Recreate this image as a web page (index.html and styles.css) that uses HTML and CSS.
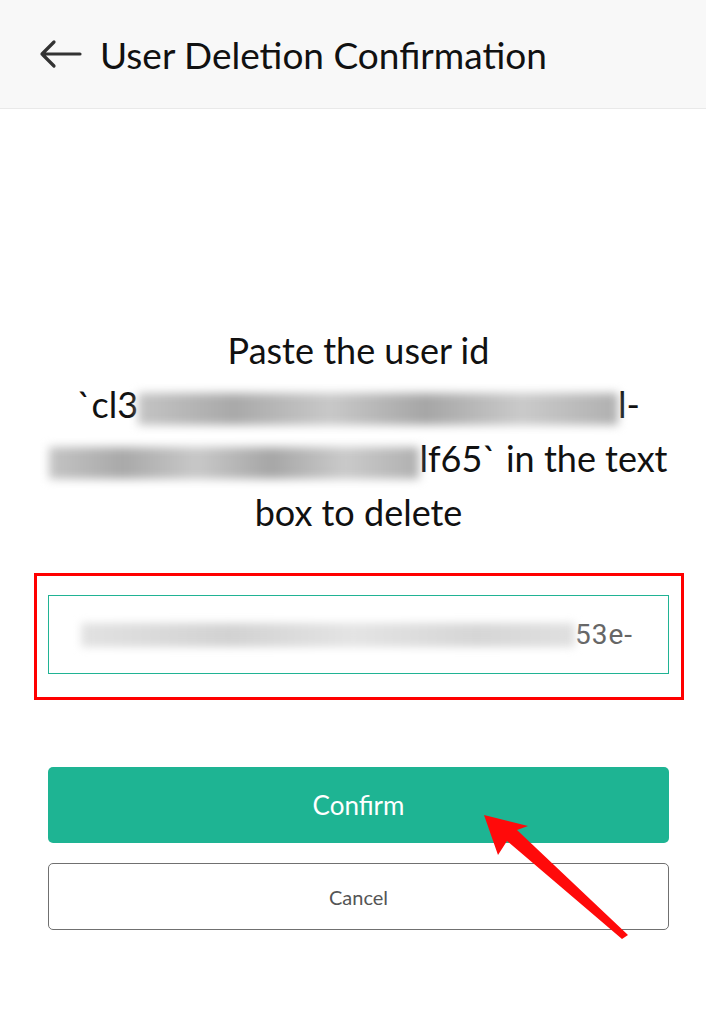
FILE: index.html
```html
<!DOCTYPE html>
<html lang="en">
<head>
    <meta charset="UTF-8">
    <title>User Deletion Confirmation</title>
    <link rel="stylesheet" href="styles.css">
</head>
<body>
    <div class="header">
        <svg class="back" width="44" height="30" viewBox="0 0 44 30">
            <path d="M42 15 H4 M16 3 L4 15 L16 27" fill="none" stroke="#333" stroke-width="3.2" stroke-linecap="round" stroke-linejoin="round"/>
        </svg>
        <h1 class="title">User Deletion Confirmation</h1>
    </div>

    <div class="content">
        <div class="message">
            <span class="line">Paste the user id</span>
            <span class="line">`cl3<span class="blur blur-a"></span>l-</span>
            <span class="line"><span class="blur blur-b"></span>lf65` in the text</span>
            <span class="line">box to delete</span>
        </div>

        <div class="highlight">
            <div class="field">
                <span class="blur blur-c"></span><span class="field-text">53e-</span>
            </div>
        </div>

        <div class="buttons">
            <button class="button confirm">Confirm</button>
            <button class="button cancel">Cancel</button>
        </div>
    </div>

    <!-- annotation arrow over the confirm button -->
    <svg class="pointer" width="706" height="1024" viewBox="0 0 706 1024">
        <polygon points="484,815 498,855 507,841 622,939 628,935 517,830 528,826" fill="#ff0a0a"/>
    </svg>
</body>
</html>
```

FILE: styles.css
```css
body {
    margin: 0;
    padding: 0;
    font-family: Lato, "Open Sans", sans-serif;
    background-color: #ffffff;
    color: #111111;
}

.header {
    height: 108px;
    background-color: #f8f8f8;
    border-bottom: 1px solid #e9e9e9;
    display: flex;
    align-items: center;
    padding-left: 38px;
}

.back {
    margin-right: 18px;
}

.title {
    margin: 0;
    font-size: 37px;
    font-weight: 400;
    color: #111111;
}

.content {
    padding: 214px 37px 0 48px;
}

.message {
    text-align: center;
    font-size: 36px;
    line-height: 54px;
}

.line {
    display: block;
    white-space: nowrap;
}

.blur {
    display: inline-block;
    background: linear-gradient(90deg, #c4c4c4, #a9a9a9 20%, #c8c8c8 40%, #a6a6a6 60%, #cacaca 80%, #b0b0b0);
    filter: blur(5px);
    vertical-align: middle;
}

.blur-a {
    width: 480px;
    height: 32px;
}

.blur-b {
    width: 370px;
    height: 32px;
}

.blur-c {
    width: 494px;
    height: 24px;
    background: linear-gradient(90deg, #e2e2e2, #d2d2d2 30%, #e4e4e4 55%, #d6d6d6 80%, #e0e0e0);
    filter: blur(4px);
}

.highlight {
    margin: 34px -15px 0 -14px;
    border: 3px solid #ff0000;
    padding: 19px 12px 23px 11px;
}

.field {
    height: 77px;
    border: 1px solid #20b394;
    display: flex;
    align-items: center;
    padding-left: 32px;
}

.field-text {
    font-family: Roboto, sans-serif;
    font-size: 28px;
    letter-spacing: 1px;
    color: #666666;
}

.buttons {
    margin-top: 67px;
    display: flex;
    flex-direction: column;
    gap: 20px;
}

.button {
    width: 100%;
    font-family: Lato, sans-serif;
    border-radius: 5px;
    cursor: pointer;
}

.confirm {
    height: 76px;
    background-color: #1eb493;
    border: none;
    color: #ffffff;
    font-size: 26px;
}

.cancel {
    height: 67px;
    background-color: #ffffff;
    border: 1.5px solid #707070;
    color: #555555;
    font-size: 20px;
}

.pointer {
    position: absolute;
    left: 0;
    top: 0;
    pointer-events: none;
}
```
